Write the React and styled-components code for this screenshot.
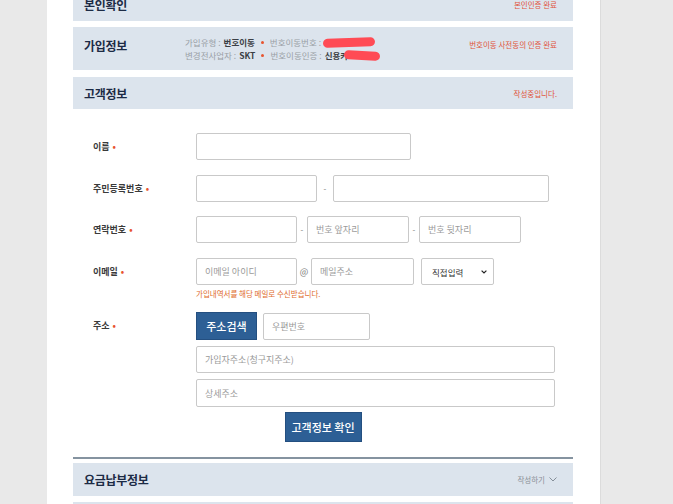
import styled, { createGlobalStyle } from 'styled-components';

const GlobalStyle = createGlobalStyle`
    html, body {
        margin: 0;
        padding: 0;
        background: #e9e9e9;
        font-family: 'Noto Sans CJK KR', 'Noto Sans', sans-serif;
        overflow: hidden;
    }
`;

const Page = styled.div`
    width: 553px;
    height: 504px;
    margin-left: 47px;
    background: #fff;
    box-shadow: 1px 0 0 #dcdcdc;
    overflow: hidden;
`;

const Inner = styled.div`
    width: 500px;
    padding-left: 26px;
    margin-top: -12px;
    display: flex;
    flex-direction: column;
`;

const Panel = styled.div`
    display: flex;
    align-items: ${(p) => (p.$top ? 'flex-start' : 'center')};
    height: ${(p) => p.$height}px;
    padding: ${(p) => (p.$top ? '9px' : '0')} 16px 0 11px;
    margin-top: ${(p) => p.$mt || 0}px;
    background: #dce4ed;
    box-sizing: border-box;
`;

const Title = styled.h3`
    margin: 0;
    width: 101px;
    font-size: 12px;
    font-weight: 700;
    color: #1c2b45;
    letter-spacing: -0.3px;
`;

const Status = styled.span`
    margin-left: auto;
    font-size: 7.5px;
    display: flex;
    align-items: center;
    gap: 4px;
    color: ${(p) => (p.$gray ? '#8a8f96' : '#e1533a')};
`;

const InfoBox = styled.div`
    display: flex;
    flex-direction: column;
    gap: 1px;
    font-size: 8.5px;
    color: #9a9fa6;
    line-height: 12px;
`;

const InfoLine = styled.div`
    display: flex;
    align-items: center;
`;

const Strong = styled.b`
    color: #3b3f45;
    font-weight: 700;
    margin-left: 3px;
`;

const Dot = styled.span`
    width: 3px;
    height: 3px;
    border-radius: 50%;
    background: #e8542f;
    margin: 0 6px;
`;

const Redact = styled.span`
    display: inline-block;
    width: ${(p) => p.$w}px;
    height: 9px;
    margin-left: ${(p) => p.$ml || 0}px;
    border-radius: 6px;
    background: #ff4b55;
    transform: rotate(${(p) => p.$r || 0}deg);
`;

const Form = styled.div`
    display: flex;
    flex-direction: column;
    padding: 24px 0 15px;
`;

const Row = styled.div`
    display: flex;
    align-items: flex-start;
    margin-bottom: ${(p) => p.$mb}px;
`;

const Label = styled.label`
    width: 123px;
    padding-left: 20px;
    height: 27px;
    display: flex;
    align-items: center;
    font-size: 9px;
    font-weight: 700;
    color: #3a3a3a;
    flex-shrink: 0;
    box-sizing: border-box;
`;

const Req = styled.span`
    color: #e8542f;
    margin-left: 3px;
    font-size: 9px;
`;

const Fields = styled.div`
    display: flex;
    flex-direction: column;
    gap: ${(p) => p.$gap || 6}px;
`;

const FieldLine = styled.div`
    display: flex;
    align-items: center;
`;

const Input = styled.input`
    width: ${(p) => p.$w}px;
    height: 27px;
    box-sizing: border-box;
    border: 1px solid #c9c9c9;
    border-radius: 2px;
    padding: 0 8px;
    font-family: inherit;
    font-size: 9px;
    color: #333;
    outline: none;
    &::placeholder {
        color: #9a9a9a;
    }
`;

const Sep = styled.span`
    width: ${(p) => p.$w}px;
    text-align: center;
    font-size: ${(p) => (p.$at ? 9 : 8)}px;
    color: #777;
`;

const Select = styled.div`
    width: 73px;
    height: 27px;
    margin-left: 7px;
    box-sizing: border-box;
    border: 1px solid #c9c9c9;
    border-radius: 2px;
    display: flex;
    align-items: center;
    padding: 0 6px 0 10px;
    font-size: 8.5px;
    color: #333;
    svg {
        margin-left: auto;
    }
`;

const Help = styled.p`
    margin: 0;
    font-size: 7.5px;
    color: #e06b2b;
`;

const BlueButton = styled.button`
    width: ${(p) => p.$w}px;
    height: ${(p) => p.$h}px;
    background: #2d5f95;
    border: 1px solid #244f80;
    color: #fff;
    font-family: inherit;
    font-size: 11px;
    font-weight: 500;
    padding: 0;
    margin-right: ${(p) => p.$mr || 0}px;
    cursor: pointer;
`;

const Center = styled.div`
    display: flex;
    justify-content: center;
    margin-top: 5px;
`;

const Divider = styled.hr`
    margin: 0;
    border: none;
    height: 2px;
    background: #8593a0;
`;

const Chevron = () => (
    <svg width='8' height='5' viewBox='0 0 8 5'>
        <path d='M0.5 0.5 L4 4 L7.5 0.5' fill='none' stroke='#7b8490' strokeWidth='0.9' />
    </svg>
);

const App = () => {
    return (
        <>
            <GlobalStyle />
            <Page>
                <Inner>
                    <Panel $height={33}>
                        <Title>본인확인</Title>
                        <Status>본인인증 완료</Status>
                    </Panel>
                    <Panel $height={43} $mt={6} $top>
                        <Title style={{ marginTop: '1px' }}>가입정보</Title>
                        <InfoBox>
                            <InfoLine>
                                가입유형 :<Strong>번호이동</Strong>
                                <Dot />
                                번호이동번호 :<Redact $w={52} $ml={2} $r={-2} />
                            </InfoLine>
                            <InfoLine>
                                변경전사업자 :<Strong>SKT</Strong>
                                <Dot />
                                번호이동인증 :<Strong>신용카</Strong>
                                <Redact $w={36} $ml={-4} $r={3} />
                            </InfoLine>
                        </InfoBox>
                        <Status style={{ marginTop: '3px' }}>번호이동 사전동의 인증 완료</Status>
                    </Panel>
                    <Panel $height={32} $mt={7}>
                        <Title>고객정보</Title>
                        <Status>작성중입니다.</Status>
                    </Panel>

                    <Form>
                        <Row $mb={15}>
                            <Label>
                                이름<Req>•</Req>
                            </Label>
                            <Input $w={215} />
                        </Row>
                        <Row $mb={14}>
                            <Label>
                                주민등록번호<Req>•</Req>
                            </Label>
                            <FieldLine>
                                <Input $w={121} />
                                <Sep $w={16}>-</Sep>
                                <Input $w={216} />
                            </FieldLine>
                        </Row>
                        <Row $mb={15}>
                            <Label>
                                연락번호<Req>•</Req>
                            </Label>
                            <FieldLine>
                                <Input $w={101} />
                                <Sep $w={10}>-</Sep>
                                <Input $w={102} placeholder='번호 앞자리' />
                                <Sep $w={10}>-</Sep>
                                <Input $w={102} placeholder='번호 뒷자리' />
                            </FieldLine>
                        </Row>
                        <Row $mb={13}>
                            <Label>
                                이메일<Req>•</Req>
                            </Label>
                            <Fields $gap={3}>
                                <FieldLine>
                                    <Input $w={101} placeholder='이메일 아이디' />
                                    <Sep $w={14} $at>@</Sep>
                                    <Input $w={103} placeholder='메일주소' />
                                    <Select>
                                        직접입력
                                        <svg width='6' height='4' viewBox='0 0 6 4'>
                                            <path d='M0.6 0.6 L3 3 L5.4 0.6' fill='none' stroke='#222' strokeWidth='1.2' />
                                        </svg>
                                    </Select>
                                </FieldLine>
                                <Help>가입내역서를 해당 메일로 수신받습니다.</Help>
                            </Fields>
                        </Row>
                        <Row $mb={0}>
                            <Label>
                                주소<Req>•</Req>
                            </Label>
                            <Fields>
                                <FieldLine>
                                    <BlueButton $w={61} $h={28} $mr={6}>
                                        주소검색
                                    </BlueButton>
                                    <Input $w={107} placeholder='우편번호' />
                                </FieldLine>
                                <Input $w={359} placeholder='가입자주소(청구지주소)' />
                                <Input $w={359} placeholder='상세주소' style={{ height: '28px' }} />
                            </Fields>
                        </Row>
                        <Center>
                            <BlueButton $w={77} $h={30}>
                                고객정보 확인
                            </BlueButton>
                        </Center>
                    </Form>

                    <Divider />
                    <Panel $height={33} $mt={4}>
                        <Title>요금납부정보</Title>
                        <Status $gray>
                            작성하기 <Chevron />
                        </Status>
                    </Panel>
                    <Panel $height={33} $mt={6} />
                </Inner>
            </Page>
        </>
    );
};

export default App;
